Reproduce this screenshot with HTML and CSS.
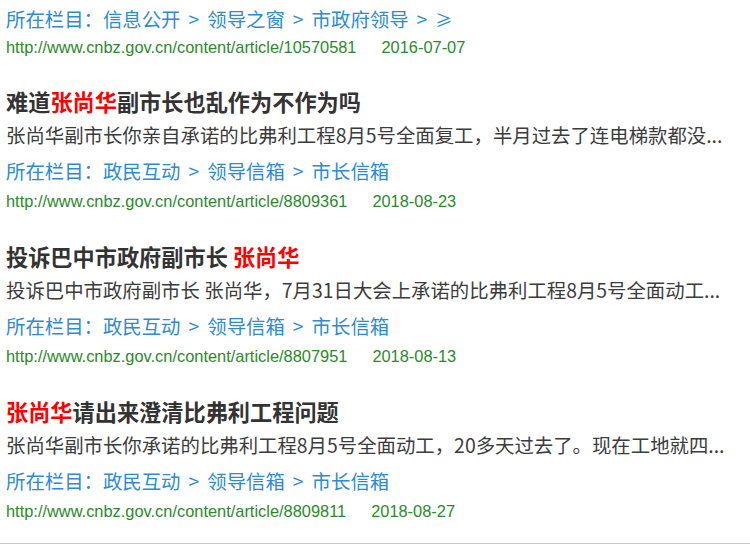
FILE: index.html
```html
<!DOCTYPE html>
<html lang="zh-CN">
<head>
  <meta charset="UTF-8">
  <title>搜索结果</title>
  <link rel="stylesheet" href="styles.css">
</head>
<body>
  <div class="results">
    <div class="item item-first">
      <p class="crumb">所在栏目：信息公开<span class="sep">&gt;</span>领导之窗<span class="sep">&gt;</span>市政府领导<span class="sep">&gt;</span><span class="last">≥</span></p>
      <p class="url">http://www.cnbz.gov.cn/content/article/10570581<span class="date">2016-07-07</span></p>
    </div>

    <div class="item">
      <h3 class="title">难道<em>张尚华</em>副市长也乱作为不作为吗</h3>
      <p class="snippet">张尚华副市长你亲自承诺的比弗利工程8月5号全面复工，半月过去了连电梯款都没...</p>
      <p class="crumb">所在栏目：政民互动<span class="sep">&gt;</span>领导信箱<span class="sep">&gt;</span>市长信箱</p>
      <p class="url">http://www.cnbz.gov.cn/content/article/8809361<span class="date">2018-08-23</span></p>
    </div>

    <div class="item">
      <h3 class="title">投诉巴中市政府副市长 <em>张尚华</em></h3>
      <p class="snippet">投诉巴中市政府副市长 张尚华，7月31日大会上承诺的比弗利工程8月5号全面动工...</p>
      <p class="crumb">所在栏目：政民互动<span class="sep">&gt;</span>领导信箱<span class="sep">&gt;</span>市长信箱</p>
      <p class="url">http://www.cnbz.gov.cn/content/article/8807951<span class="date">2018-08-13</span></p>
    </div>

    <div class="item">
      <h3 class="title"><em>张尚华</em>请出来澄清比弗利工程问题</h3>
      <p class="snippet">张尚华副市长你承诺的比弗利工程8月5号全面动工，20多天过去了。现在工地就四...</p>
      <p class="crumb">所在栏目：政民互动<span class="sep">&gt;</span>领导信箱<span class="sep">&gt;</span>市长信箱</p>
      <p class="url">http://www.cnbz.gov.cn/content/article/8809811<span class="date">2018-08-27</span></p>
    </div>
  </div>
</body>
</html>
```

FILE: styles.css
```css
body {
  margin: 0;
  background: #fff;
  font-family: "Noto Sans CJK SC", "Noto Sans", sans-serif;
  color: #333;
}
.results {
  padding: 4px 0 0 6px;
  height: 539px;
  border-bottom: 1px solid #c8c8c8;
  overflow: hidden;
}
.item {
  margin-bottom: 19px;
  white-space: nowrap;
}
.item p,
.item h3 {
  margin: 0;
}
.item-first {
  margin-bottom: 20px;
}
.title {
  font-size: 22.2px;
  font-weight: bold;
  line-height: 36px;
  padding-top: 3px;
  color: #333;
}
.title em {
  font-style: normal;
  color: #f00;
}
.snippet {
  font-size: 19.4px;
  line-height: 34px;
  margin-top: -1px !important;
  color: #3c3c3c;
}
.crumb {
  font-size: 19.4px;
  line-height: 29px;
  color: #2d8ad6;
}
.snippet + .crumb {
  margin-top: 4px;
}
.sep {
  padding: 0 8px;
}
.last {
  font-size: 17px;
}
.url {
  font-family: "Liberation Sans", Arial, sans-serif;
  font-size: 16.4px;
  line-height: 30px;
  color: #2b8a2b;
}
.crumb + .url {
  margin-top: 1px;
}
.item-first .url {
  line-height: 26px;
  margin-top: 0;
}
.date {
  margin-left: 25px;
}
```
